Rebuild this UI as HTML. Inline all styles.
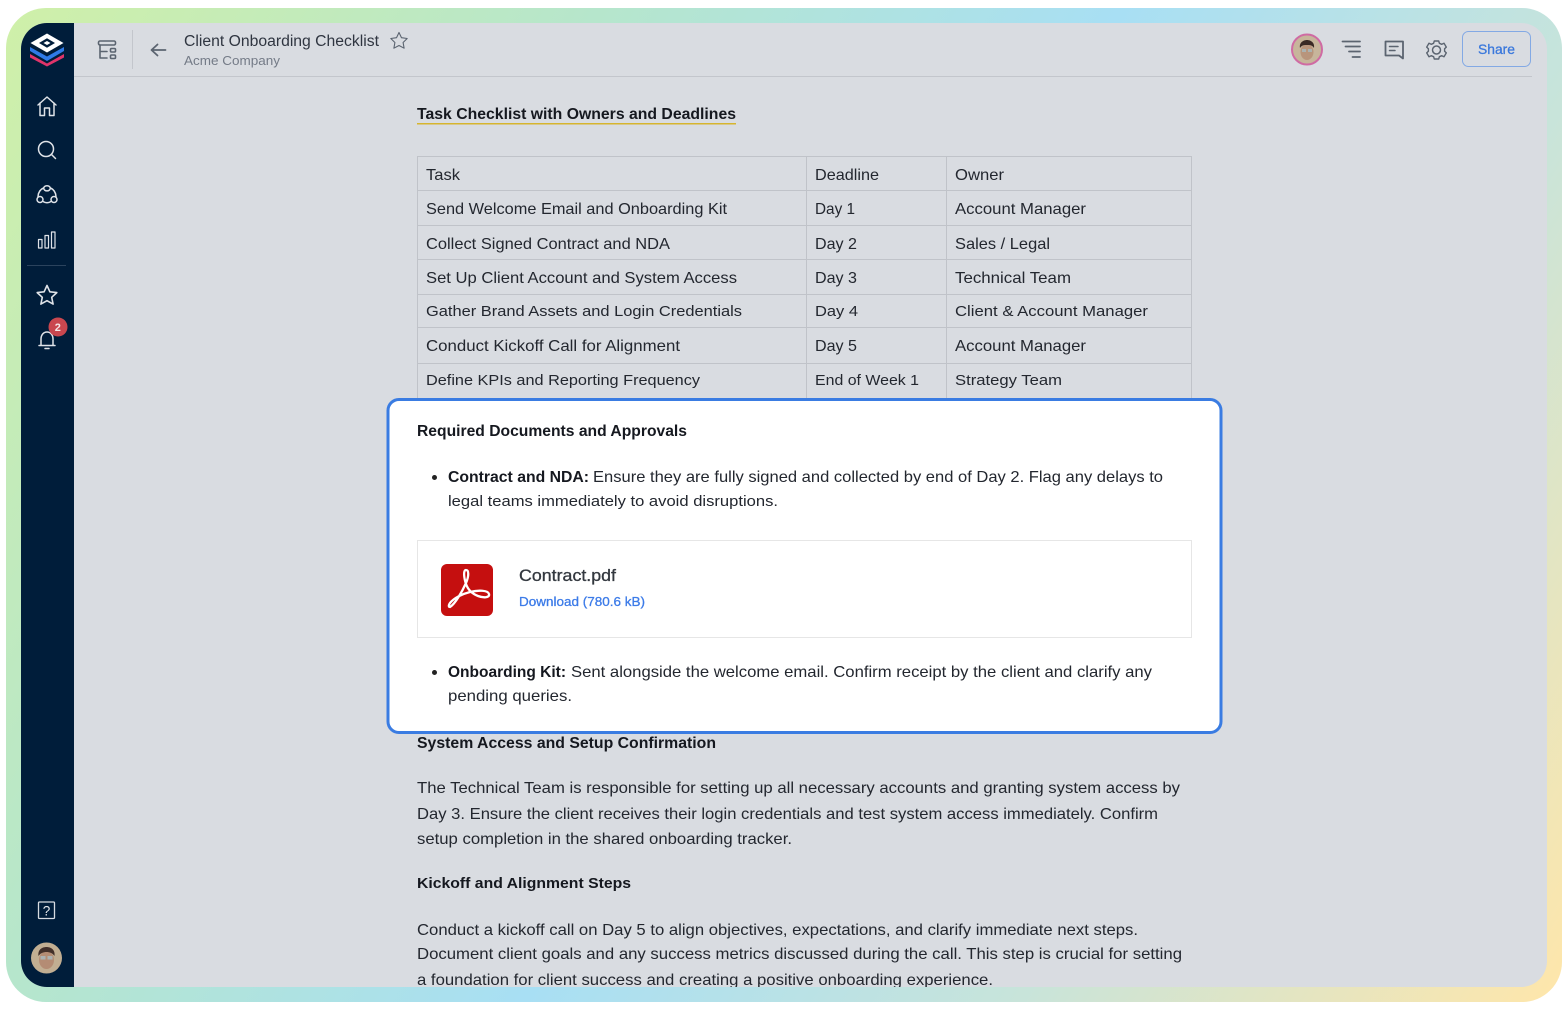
<!DOCTYPE html>
<html lang="en"><head><meta charset="utf-8"><title>Client Onboarding Checklist</title>
<style>
html,body{margin:0;padding:0;background:#fff;width:1568px;height:1011px;overflow:hidden}
svg{display:block}
text{font-family:"Liberation Sans",sans-serif;font-size:16px;fill:#23272f}
.b{font-weight:700;fill:#15181f}
.m{stroke-width:.3px}
</style></head><body>
<svg width="1568" height="1011" viewBox="0 0 1568 1011" xmlns="http://www.w3.org/2000/svg">
<defs>
<linearGradient id="g" gradientUnits="userSpaceOnUse" x1="0" y1="0" x2="1588" y2="959">
<stop offset="0" stop-color="#d0f0a8"/><stop offset=".28" stop-color="#b6e6cc"/><stop offset=".52" stop-color="#a8dff4"/><stop offset=".75" stop-color="#c8e4da"/><stop offset="1" stop-color="#ffe6aa"/>
</linearGradient>
<clipPath id="panel"><rect x="21" y="23" width="1526" height="964" rx="26"/></clipPath>
</defs>
<rect x="6" y="8" width="1556" height="994" rx="40" fill="url(#g)"/>
<g clip-path="url(#panel)">
<rect x="21" y="23" width="1526" height="964" fill="#d9dce1"/>
<rect x="21" y="23" width="53" height="964" fill="#001d3a"/>
<!-- header -->
<rect x="74" y="76" width="1458" height="1" fill="#c3c6cc"/>
<rect x="132" y="30" width="1" height="39" fill="#c3c6cc"/>
<g fill="none" stroke="#5b6470" stroke-width="1.6" stroke-linecap="round" stroke-linejoin="round">
<rect x="98.500" y="41" width="17" height="4" rx="1.500"/>
<path d="M100 45V58H107M100 51.500H107"/>
<rect x="110.500" y="48.500" width="5" height="3.500" rx="1"/>
<rect x="110.500" y="55" width="5" height="3.500" rx="1"/>
<path d="M165.500 50H152M157.500 44.500L151.500 50L157.500 55.500" stroke-width="1.800"/>
<path d="M399 32.500l2.500 5.200 5.700.8-4.100 4 1 5.700-5.100-2.700-5.100 2.700 1-5.700-4.100-4 5.700-.8z" stroke-width="1.100"/>
<path d="M1342.500 41.500H1360M1345.500 46.500H1360M1349 51.500H1360M1352.500 57H1360" stroke-width="1.800"/>
<path d="M1385.500 41.500H1403V58.500L1399 55.500H1385.500Z" stroke-width="1.800"/>
<path d="M1389.500 46.500H1398M1389.500 50.500H1395" stroke-width="1.500"/>
<circle cx="1436.500" cy="50" r="4" stroke-width="1.500"/>
<path d="M1434.300 41h4.400l.7 2.300 2.400 1 2.200-1.100 2.300 3.900-1.700 1.700v2.400l1.700 1.700-2.300 3.900-2.200-1.100-2.400 1-.7 2.300h-4.400l-.7-2.300-2.400-1-2.200 1.100-2.300-3.900 1.700-1.700v-2.400l-1.700-1.700 2.300-3.900 2.200 1.100 2.400-1z" stroke-width="1.400"/>
</g>
<!-- header avatar -->
<circle cx="1307" cy="49.500" r="15" fill="#c7b59b" stroke="#cf6ba3" stroke-width="2"/>
<ellipse cx="1307" cy="52" rx="6.500" ry="8" fill="#b8957c"/>
<path d="M1300 48c-1-6 4-8 7-8s8 2 7 8c-2-3-4-3-7-3s-5 0-7 3z" fill="#3a2a25"/>
<rect x="1302" y="49" width="4" height="3" fill="#a8b8bb" opacity=".85"/><rect x="1308" y="49" width="4" height="3" fill="#a8b8bb" opacity=".85"/>
<!-- share -->
<rect x="1462.500" y="31.500" width="68" height="35" rx="6" fill="none" stroke="#83a9e4" stroke-width="1"/>
<text class="m" x="1478" y="54" textLength="37" lengthAdjust="spacingAndGlyphs" style="font-size:14px;fill:#3a78dc;stroke:#3a78dc">Share</text>
<!-- title -->
<text x="184" y="46" textLength="195" lengthAdjust="spacingAndGlyphs" style="font-size:15.500px;fill:#2f3540">Client Onboarding Checklist</text>
<text x="184" y="65" textLength="96" lengthAdjust="spacingAndGlyphs" style="font-size:12.500px;fill:#747b87">Acme Company</text>
<!-- sidebar -->
<path d="M47 33.500L63.500 43L47 52.500L30.500 43Z" fill="#fff"/>
<path d="M47 38.300L55 43L47 47.700L39 43Z" fill="#001d3a"/>
<path d="M43.500 43L47 41L50.500 43L47 45Z" fill="#fff"/>
<path d="M30 47L47 56.500L64 47V51L47 61L30 51Z" fill="#2f7be8"/>
<path d="M30 54L47 63.500L64 54V57.500L47 66.500L30 57.500Z" fill="#e0346a"/>
<g fill="none" stroke="#dfe3e8" stroke-width="1.500" stroke-linecap="round" stroke-linejoin="round">
<path d="M38 105L47 97L56 105M40 103V115.500H44.500V108H49.500V115.500H54V103"/>
<circle cx="46" cy="149" r="7.500"/><path d="M51.500 154.500L55.500 158.500"/>
<ellipse cx="47" cy="188.300" rx="3.300" ry="2.600"/><circle cx="40" cy="199.500" r="3"/><circle cx="54" cy="199.500" r="3"/>
<path d="M43.500 188C40 189.500 38.300 192.500 38 196.500M50.500 188C54 189.500 55.700 192.500 56 196.500M43 201.500C45.500 203 48.500 203 51 201.500"/>
<rect x="38.500" y="239.500" width="3.500" height="8.500" stroke-width="1.200"/>
<rect x="45" y="235.500" width="3.500" height="12.500" stroke-width="1.200"/>
<rect x="51.500" y="232" width="3.500" height="16" stroke-width="1.200"/>
<path d="M47 285.500l2.900 6.300 6.900.8-5.100 4.700 1.400 6.800-6.100-3.400-6.100 3.400 1.400-6.800-5.100-4.700 6.900-.8z" stroke-width="1.600"/>
<path d="M39 345.500H55M41 345.500V339C41 335 43.500 332 47 332C50.500 332 53 335 53 339V345.500M45 348.500H49"/>
</g>
<rect x="27" y="265" width="39" height="1" fill="#2b435d"/>
<circle cx="58" cy="327" r="9.500" fill="#c9474f"/>
<text x="54.700" y="331" style="font-size:11px;font-weight:700;fill:#f5e8e8">2</text>
<rect x="38.500" y="902" width="16" height="16.500" rx="1" fill="none" stroke="#d6dbe1" stroke-width="1.300"/>
<text x="42.800" y="915.500" style="font-size:13.500px;fill:#e6e9ed">?</text>
<circle cx="46.500" cy="958" r="15.500" fill="#c1ae92"/>
<ellipse cx="46.500" cy="960" rx="7.500" ry="9" fill="#b48c74"/>
<path d="M38.500 956c-1-7 4.500-9 8-9s9 2 8 9c-2-3-5-4-8-4s-6 1-8 4z" fill="#43302a"/>
<rect x="40.500" y="956" width="5" height="3.500" fill="#aab8bd" opacity=".85"/><rect x="47.500" y="956" width="5" height="3.500" fill="#aab8bd" opacity=".85"/>

<!-- heading -->
<text class="b" x="417" y="119" textLength="319" lengthAdjust="spacingAndGlyphs">Task Checklist with Owners and Deadlines</text>
<rect x="417" y="123" width="319" height="1.500" fill="#d6b52e"/>
<!-- table -->
<g fill="none" stroke="#c0c3c9" stroke-width="1">
<rect x="417.500" y="156.500" width="774" height="242"/>
<path d="M806.500 156V398M946.500 156V398M417 190.500H1192M417 225.500H1192M417 259.500H1192M417 294.500H1192M417 327.500H1192M417 363.500H1192"/>
</g>
<g>
<text x="426" y="180" textLength="34" lengthAdjust="spacingAndGlyphs">Task</text>
<text x="815" y="180" textLength="64" lengthAdjust="spacingAndGlyphs">Deadline</text>
<text x="955" y="180" textLength="49" lengthAdjust="spacingAndGlyphs">Owner</text>
<text x="426" y="214" textLength="301" lengthAdjust="spacingAndGlyphs">Send Welcome Email and Onboarding Kit</text>
<text x="815" y="214" textLength="40" lengthAdjust="spacingAndGlyphs">Day 1</text>
<text x="955" y="214" textLength="131" lengthAdjust="spacingAndGlyphs">Account Manager</text>
<text x="426" y="249" textLength="244" lengthAdjust="spacingAndGlyphs">Collect Signed Contract and NDA</text>
<text x="815" y="249" textLength="42" lengthAdjust="spacingAndGlyphs">Day 2</text>
<text x="955" y="249" textLength="95" lengthAdjust="spacingAndGlyphs">Sales / Legal</text>
<text x="426" y="283" textLength="311" lengthAdjust="spacingAndGlyphs">Set Up Client Account and System Access</text>
<text x="815" y="283" textLength="42" lengthAdjust="spacingAndGlyphs">Day 3</text>
<text x="955" y="283" textLength="116" lengthAdjust="spacingAndGlyphs">Technical Team</text>
<text x="426" y="316" textLength="316" lengthAdjust="spacingAndGlyphs" style="font-size:15px">Gather Brand Assets and Login Credentials</text>
<text x="815" y="316" textLength="43" lengthAdjust="spacingAndGlyphs" style="font-size:15px">Day 4</text>
<text x="955" y="316" textLength="193" lengthAdjust="spacingAndGlyphs" style="font-size:15px">Client &amp; Account Manager</text>
<text x="426" y="351" textLength="254" lengthAdjust="spacingAndGlyphs">Conduct Kickoff Call for Alignment</text>
<text x="815" y="351" textLength="42" lengthAdjust="spacingAndGlyphs">Day 5</text>
<text x="955" y="351" textLength="131" lengthAdjust="spacingAndGlyphs">Account Manager</text>
<text x="426" y="385" textLength="274" lengthAdjust="spacingAndGlyphs" style="font-size:15px">Define KPIs and Reporting Frequency</text>
<text x="815" y="385" textLength="104" lengthAdjust="spacingAndGlyphs" style="font-size:15px">End of Week 1</text>
<text x="955" y="385" textLength="107" lengthAdjust="spacingAndGlyphs" style="font-size:15px">Strategy Team</text>
</g>
<!-- modal highlight -->
<rect x="388" y="399.500" width="833" height="333" rx="11" fill="#fff" stroke="#3a7ce2" stroke-width="3"/>
<text class="b" x="417" y="436" textLength="270" lengthAdjust="spacingAndGlyphs">Required Documents and Approvals</text>
<circle cx="434.500" cy="477.500" r="2.500" fill="#222"/>
<text class="b" x="448" y="482" textLength="141" lengthAdjust="spacingAndGlyphs">Contract and NDA:</text>
<text x="593" y="482" textLength="570" lengthAdjust="spacingAndGlyphs">Ensure they are fully signed and collected by end of Day 2. Flag any delays to</text>
<text x="448" y="506" textLength="330" lengthAdjust="spacingAndGlyphs" style="font-size:14.500px">legal teams immediately to avoid disruptions.</text>
<rect x="417.500" y="540.500" width="774" height="97" fill="#fff" stroke="#e6e6e6"/>
<rect x="441" y="564" width="52" height="52" rx="6" fill="#c50f0f"/>
<path d="M450 607C455 604 462 592 466 583C469 576 469 570 466 570C463 570 464 578 466 584C468 590 473 594 478 596C483 598 490 598 489 594C488 590 478 590 470 592C462 594 454 598 450 603C448 606 449 607 450 607Z" fill="none" stroke="#fff" stroke-width="2.300" stroke-linejoin="round"/>
<text class="m" x="519" y="581" textLength="97" lengthAdjust="spacingAndGlyphs" style="font-size:16.500px;fill:#33383f;stroke:#33383f">Contract.pdf</text>
<text class="m" x="519" y="606" textLength="126" lengthAdjust="spacingAndGlyphs" style="font-size:13px;fill:#3c7be8;stroke:#3c7be8">Download (780.6 kB)</text>
<circle cx="434.500" cy="672.500" r="2.500" fill="#222"/>
<text class="b" x="448" y="677" textLength="118" lengthAdjust="spacingAndGlyphs">Onboarding Kit:</text>
<text x="571" y="677" textLength="581" lengthAdjust="spacingAndGlyphs">Sent alongside the welcome email. Confirm receipt by the client and clarify any</text>
<text x="448" y="701" textLength="124" lengthAdjust="spacingAndGlyphs">pending queries.</text>
<!-- body -->
<text class="b" x="417" y="748" textLength="299" lengthAdjust="spacingAndGlyphs">System Access and Setup Confirmation</text>
<text x="417" y="793" textLength="763" lengthAdjust="spacingAndGlyphs">The Technical Team is responsible for setting up all necessary accounts and granting system access by</text>
<text x="417" y="819" textLength="741" lengthAdjust="spacingAndGlyphs">Day 3. Ensure the client receives their login credentials and test system access immediately. Confirm</text>
<text x="417" y="844" textLength="375" lengthAdjust="spacingAndGlyphs">setup completion in the shared onboarding tracker.</text>
<text class="b" x="417" y="888" textLength="214" lengthAdjust="spacingAndGlyphs" style="font-size:14.500px">Kickoff and Alignment Steps</text>
<text x="417" y="935" textLength="721" lengthAdjust="spacingAndGlyphs">Conduct a kickoff call on Day 5 to align objectives, expectations, and clarify immediate next steps.</text>
<text x="417" y="959" textLength="765" lengthAdjust="spacingAndGlyphs">Document client goals and any success metrics discussed during the call. This step is crucial for setting</text>
<text x="417" y="985" textLength="576" lengthAdjust="spacingAndGlyphs">a foundation for client success and creating a positive onboarding experience.</text>
</g>
</svg>
</body></html>
